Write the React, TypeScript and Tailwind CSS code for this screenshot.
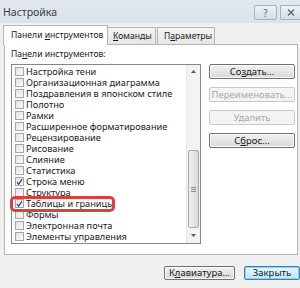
import React from "react";

const items: { label: string; checked?: boolean }[] = [
  { label: "Настройка тени" },
  { label: "Организационная диаграмма" },
  { label: "Поздравления в японском стиле" },
  { label: "Полотно" },
  { label: "Рамки" },
  { label: "Расширенное форматирование" },
  { label: "Рецензирование" },
  { label: "Рисование" },
  { label: "Слияние" },
  { label: "Статистика" },
  { label: "Строка меню", checked: true },
  { label: "Структура" },
  { label: "Таблицы и границы", checked: true },
  { label: "Формы" },
  { label: "Электронная почта" },
  { label: "Элементы управления" },
];

function Check({ checked }: { checked?: boolean }) {
  return (
    <div className="w-[9px] h-[9px] border border-[#a6a6a6] bg-gradient-to-br from-[#e2e2e2] to-[#fbfbfb] flex items-center justify-center shrink-0">
      {checked && (
        <svg width="8" height="8" viewBox="0 0 8 8">
          <path d="M1.2 4.2 L3 6.5 L7 0.8" stroke="#1c3f8a" strokeWidth="1.3" fill="none" />
        </svg>
      )}
    </div>
  );
}

function Btn({ children, disabled, w, h = "h-[15px]", def }: { children: React.ReactNode; disabled?: boolean; w: string; h?: string; def?: boolean }) {
  return (
    <div
      className={`${w} ${h} rounded-[2px] border flex items-center justify-center text-[9.5px] leading-none ${
        disabled
          ? "border-[#c9c9c9] bg-[#f4f4f4] text-[#a8a8a8]"
          : def
          ? "border-[#3c7fb1] bg-gradient-to-b from-[#eaf6fd] to-[#bee6fd] text-[#1a1a1a] shadow-[inset_0_0_0_1px_#8fd0f5]"
          : "border-[#707070] bg-gradient-to-b from-[#f2f2f2] to-[#d8d8d8] text-[#1a1a1a] shadow-[inset_0_0_0_1px_#fcfcfc]"
      }`}
    >
      <span className="whitespace-pre">{children}</span>
    </div>
  );
}

export default function App() {
  return (
    <div
      className="w-[300px] h-[288px] bg-[#f0f0f0] relative overflow-hidden flex flex-col text-[#1a1a1a]"
      style={{ fontFamily: '"Noto Sans", "Open Sans", sans-serif' }}
    >
      {/* Title bar */}
      <div className="h-[23px] shrink-0 bg-gradient-to-b from-[#e2e8ef] to-[#dbe2ea] flex items-start justify-between pl-[3px]">
        <span className="text-[10.5px] text-[#3a3a3a] mt-[5px]">Настройка</span>
        <div className="flex gap-[3px] mt-[5px]">
          <div className="w-[23px] h-[15px] border border-[#a3b1c2] rounded-[2px] bg-gradient-to-b from-[#eef2f6] to-[#d6dee8] flex items-center justify-center text-[10px] text-[#5a6a7c] leading-none">
            ?
          </div>
          <div className="w-[20px] h-[15px] border border-r-0 border-[#a3b1c2] rounded-l-[2px] bg-gradient-to-b from-[#eef2f6] to-[#d6dee8] flex items-center justify-center">
            <svg width="8" height="7" viewBox="0 0 8 7">
              <path d="M1 0.5 L7 6.5 M7 0.5 L1 6.5" stroke="#5a6a7c" strokeWidth="1.4" />
            </svg>
          </div>
        </div>
      </div>

      {/* Tabs */}
      <div className="flex items-end pl-[3px] h-[20px] shrink-0 mt-[1px]">
        <div className="h-[20px] w-[105px] border border-b-0 border-[#b5b5b5] bg-white flex items-center pl-[7px] text-[8.6px] relative z-10 -mb-px">
          <span className="whitespace-pre">
            Панели <span className="underline">и</span>нструментов
          </span>
        </div>
        <div className="h-[17px] w-[48px] border border-l-0 border-b-0 border-[#b5b5b5] bg-gradient-to-b from-[#f4f4f4] to-[#e6e6e6] flex items-center pl-[5px] text-[8.6px]">
          <span>
            <span className="underline">К</span>оманды
          </span>
        </div>
        <div className="h-[17px] w-[58px] ml-[1px] border border-b-0 border-[#b5b5b5] bg-gradient-to-b from-[#f4f4f4] to-[#e6e6e6] flex items-center pl-[6px] text-[8.6px]">
          <span>
            П<span className="underline">а</span>раметры
          </span>
        </div>
      </div>

      {/* Panel */}
      <div className="ml-[4px] mr-[2px] h-[211px] border border-[#b5b5b5] bg-white flex flex-col pl-[6px] pt-[3px] shrink-0">
        <div className="text-[8.6px] leading-[12px] h-[16px]">
          Па<span className="underline">н</span>ели инструментов:
        </div>
        <div className="flex gap-[8px]">
          <div className="w-[190px] h-[180px] border border-[#828790] flex relative">
            <div className="flex-1 flex flex-col pt-[1px] pl-[3px] overflow-hidden">
              {items.map((it) => (
                <div key={it.label} className="h-[11px] shrink-0 flex items-center gap-[2px] whitespace-nowrap text-[9.2px] leading-[11px]">
                  <Check checked={it.checked} />
                  <span>{it.label}</span>
                </div>
              ))}
            </div>
            {/* scrollbar */}
            <div className="w-[14px] border-l border-[#e8e8e8] bg-[#f3f3f3] flex flex-col items-center">
              <div className="h-[13px] flex items-center justify-center">
                <svg width="5" height="3" viewBox="0 0 5 3"><path d="M0 3 L2.5 0 L5 3 Z" fill="#5a5a5a" /></svg>
              </div>
              <div className="h-[72px]" />
              <div className="w-[11px] h-[78px] border border-[#a9a9a9] rounded-[2px] bg-gradient-to-r from-[#f2f2f2] to-[#d9d9d9] flex flex-col items-center justify-center gap-[1px]">
                <div className="w-[5px] h-px bg-[#8a8a8a]" />
                <div className="w-[5px] h-px bg-[#8a8a8a]" />
                <div className="w-[5px] h-px bg-[#8a8a8a]" />
              </div>
              <div className="flex-1 flex items-center justify-center">
                <svg width="5" height="3" viewBox="0 0 5 3"><path d="M0 0 L2.5 3 L5 0 Z" fill="#5a5a5a" /></svg>
              </div>
            </div>
            {/* red annotation */}
            <div className="absolute left-[-2px] top-[131px] w-[105px] h-[16px] border-[3px] border-[#d9423b] rounded-[5px]" />
          </div>
          <div className="flex flex-col gap-[8px] pt-[0px]">
            <Btn w="w-[86px]">
              Со<span className="underline">з</span>дать...
            </Btn>
            <Btn w="w-[86px]" disabled>
              Переименовать...
            </Btn>
            <Btn w="w-[86px]" disabled>
              Удалить
            </Btn>
            <Btn w="w-[86px]">
              С<span className="underline">б</span>рос...
            </Btn>
          </div>
        </div>
      </div>

      {/* Bottom buttons */}
      <div className="flex justify-end gap-[9px] mt-[11px]">
        <Btn w="w-[71px]" h="h-[14px]">
          К<span className="underline">л</span>авиатура...
        </Btn>
        <Btn w="w-[56px]" h="h-[14px]" def>
          Закрыть
        </Btn>
      </div>
    </div>
  );
}
